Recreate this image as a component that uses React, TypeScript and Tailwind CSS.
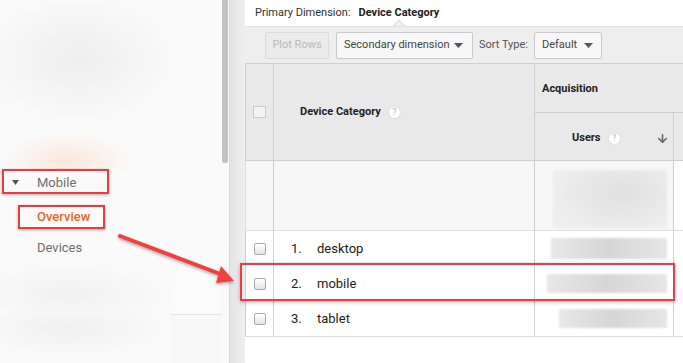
import { ArrowDown } from 'lucide-react'

const rows = [
  { n: '1.', name: 'desktop', bar: 'w-[116px] h-[21px]' },
  { n: '2.', name: 'mobile', bar: 'w-[120px] h-[19px]' },
  { n: '3.', name: 'tablet', bar: 'w-[108px] h-[19px]' },
]

function Caret() {
  return (
    <svg width="9" height="5" viewBox="0 0 9 5" className="shrink-0">
      <polygon points="0,0 9,0 4.5,5" fill="#555" />
    </svg>
  )
}

function Help() {
  return (
    <span className="inline-flex h-[13px] w-[13px] items-center justify-center rounded-full border border-[#dedede] bg-white text-[9px] font-normal leading-none text-[#b5b5b5]">
      ?
    </span>
  )
}

function Checkbox() {
  return (
    <span className="block h-[12px] w-[12px] rounded-[2px] border border-[#a8a8a8] bg-gradient-to-b from-white to-[#e4e4e4]" />
  )
}

function Sidebar() {
  return (
    <aside className="flex w-[229px] shrink-0 bg-[#fafafa]">
      <div className="flex w-[222px] flex-col">
        <div className="h-[169px] bg-[radial-gradient(ellipse_45%_40%_at_35%_35%,#eeeeee,transparent),radial-gradient(ellipse_30%_18%_at_30%_96%,#fbe7dc,transparent)]" />
        <div className="ml-[2px] flex h-[25px] w-[107px] items-center border-2 border-[#f0393e] pl-[8px] pt-[2px] shadow-[0_1px_3px_rgba(0,0,0,0.3)]">
          <svg width="7" height="5" viewBox="0 0 7 5">
            <polygon points="0,0 7,0 3.5,5" fill="#555" />
          </svg>
          <span className="ml-[18px] text-[13px] text-[#6f6f6f]">Mobile</span>
        </div>
        <div className="ml-[18px] mt-[11px] flex h-[24px] w-[87px] items-center border-2 border-[#f0393e] pl-[17px] pb-[1px] shadow-[0_1px_3px_rgba(0,0,0,0.3)]">
          <span className="text-[13px] font-medium text-[#f26322]">Overview</span>
        </div>
        <div className="flex h-[36px] items-center pl-[37px] pt-[1px] text-[13px] text-[#6f6f6f]">Devices</div>
        <div className="flex h-[49px]">
          <div className="w-[171px] bg-[radial-gradient(ellipse_60%_70%_at_40%_60%,#f1f1f1,transparent)]" />
          <div className="flex-1 bg-[#fbfbfb]" />
        </div>
        <div className="flex flex-1">
          <div className="w-[171px] bg-[radial-gradient(ellipse_60%_60%_at_40%_30%,#f0f0f0,transparent)]" />
          <div className="flex-1 border-t border-[#e4e4e4] bg-[#f8f8f8]" />
        </div>
      </div>
      <div className="flex w-[7px] flex-col">
        <div className="h-[163px] w-[6px] rounded-b-[2px] bg-[#c3c3c3]" />
      </div>
    </aside>
  )
}

function Toolbar() {
  return (
    <div className="flex h-[37px] items-center whitespace-nowrap border-t border-[#e2e2e2] bg-[#eeeeee] pl-[20px] text-[11px]">
      <div className="flex h-[27px] w-[64px] items-center justify-center rounded-[2px] border border-[#dcdcdc] bg-[#ebebeb] text-[#b9b9b9]">
        Plot Rows
      </div>
      <div className="ml-[7px] flex h-[27px] w-[137px] items-center justify-between rounded-[2px] border border-[#cacaca] bg-[#f7f7f7] pl-[7px] pr-[9px] text-[#444]">
        <span>Secondary dimension</span>
        <Caret />
      </div>
      <span className="ml-[6px] text-[#555]">Sort Type:</span>
      <div className="ml-[6px] flex h-[27px] w-[68px] items-center justify-between rounded-[2px] border border-[#cacaca] bg-[#f7f7f7] pl-[7px] pr-[8px] text-[#444]">
        <span>Default</span>
        <Caret />
      </div>
    </div>
  )
}

function TableHeader() {
  return (
    <div className="grid h-[98px] grid-cols-[28px_261px_139px_1fr] grid-rows-[49px_1fr] border-y border-l border-[#cfcfcf] bg-[#e9e9e9] text-[11px] font-bold text-[#222]">
      <div className="row-span-2 flex items-center justify-center border-r border-[#cfcfcf]">
        <span className="block h-[12px] w-[13px] border border-[#cccccc] bg-[#f3f3f3]" />
      </div>
      <div className="row-span-2 flex items-center gap-[7px] border-r border-[#cfcfcf] pl-[26px]">
        <span>Device Category</span>
        <Help />
      </div>
      <div className="col-span-2 flex items-center border-b border-[#cfcfcf] pl-[7px] pt-[2px]">Acquisition</div>
      <div className="flex items-center border-r border-[#cfcfcf] pl-[37px] pr-[4px] pt-[3px]">
        <span>Users</span>
        <span className="ml-[7px] flex">
          <Help />
        </span>
        <ArrowDown size={13} strokeWidth={3} className="ml-auto text-[#666]" />
      </div>
      <div />
    </div>
  )
}

function Table() {
  return (
    <div className="flex flex-col">
      <TableHeader />
      <div className="grid h-[70px] grid-cols-[28px_261px_139px_1fr] border-b border-l border-[#dedede] bg-[#f7f7f7]">
        <div className="border-r border-[#cfcfcf]" />
        <div className="border-r border-[#cfcfcf]" />
        <div className="border-r border-[#cfcfcf] pl-[18px] pt-[9px]">
          <div className="h-[58px] w-[114px] bg-[radial-gradient(ellipse_60%_70%_at_60%_40%,#e0e0e0,#eeeeee)] blur-[1px]" />
        </div>
        <div className="bg-white" />
      </div>
      {rows.map((r) => (
        <div key={r.n} className="grid h-[35px] grid-cols-[28px_261px_139px_1fr] border-l border-[#cfcfcf] bg-white text-[13px] text-[#222]">
          <div className="flex items-center justify-center border-r border-[#cfcfcf]">
            <Checkbox />
          </div>
          <div className="flex items-center border-r border-[#cfcfcf] pl-[17px]">
            <span className="w-[26px]">{r.n}</span>
            <span>{r.name}</span>
          </div>
          <div className="flex items-center justify-end border-r border-[#cfcfcf] pr-[6px]">
            <div className={`${r.bar} bg-gradient-to-r from-[#e8e8e8] via-[#d6d6d6] to-[#e6e6e6] blur-[1px]`} />
          </div>
          <div />
        </div>
      ))}
      <div className="border-t border-[#dcdcdc]" />
    </div>
  )
}

export default function App() {
  return (
    <div className="relative flex h-[363px] w-[683px] overflow-hidden bg-white font-['Roboto',sans-serif]">
      <Sidebar />
      <div className="w-[16px] shrink-0 border-l border-[#dadada] bg-gradient-to-r from-[#e4e4e4] to-[#efefef]" />
      <main className="flex min-w-0 flex-1 flex-col">
        <div className="flex h-[26px] items-center bg-white pl-[10px] text-[11px] text-[#333]">
          <span>Primary Dimension:</span>
          <span className="relative ml-[8px] font-bold text-[#222]">
            Device Category
            <svg width="12" height="6" viewBox="0 0 12 6" className="absolute left-[34px] top-[15px]">
              <polygon points="0,6 6,0 12,6" fill="#eeeeee" />
              <polyline points="0,6 6,0 12,6" fill="none" stroke="#d6d6d6" strokeWidth="1" />
            </svg>
          </span>
        </div>
        <Toolbar />
        <Table />
      </main>

      <div className="absolute left-[240px] top-[263px] h-[38px] w-[435px] border-2 border-[#ef3b45] shadow-[0_1px_4px_rgba(0,0,0,0.3)]" />

      <svg className="absolute left-[110px] top-[225px]" width="140" height="70" viewBox="0 0 140 70">
        <defs>
          <filter id="sh" x="-20%" y="-20%" width="140%" height="160%">
            <feDropShadow dx="0" dy="1.5" stdDeviation="1.5" floodColor="#000" floodOpacity="0.35" />
          </filter>
        </defs>
        <g filter="url(#sh)">
          <line x1="10" y1="11" x2="113" y2="50" stroke="#f04040" strokeWidth="4" strokeLinecap="round" />
          <polygon points="124,56 111,41 106,58" fill="#f04040" />
        </g>
      </svg>
    </div>
  )
}
